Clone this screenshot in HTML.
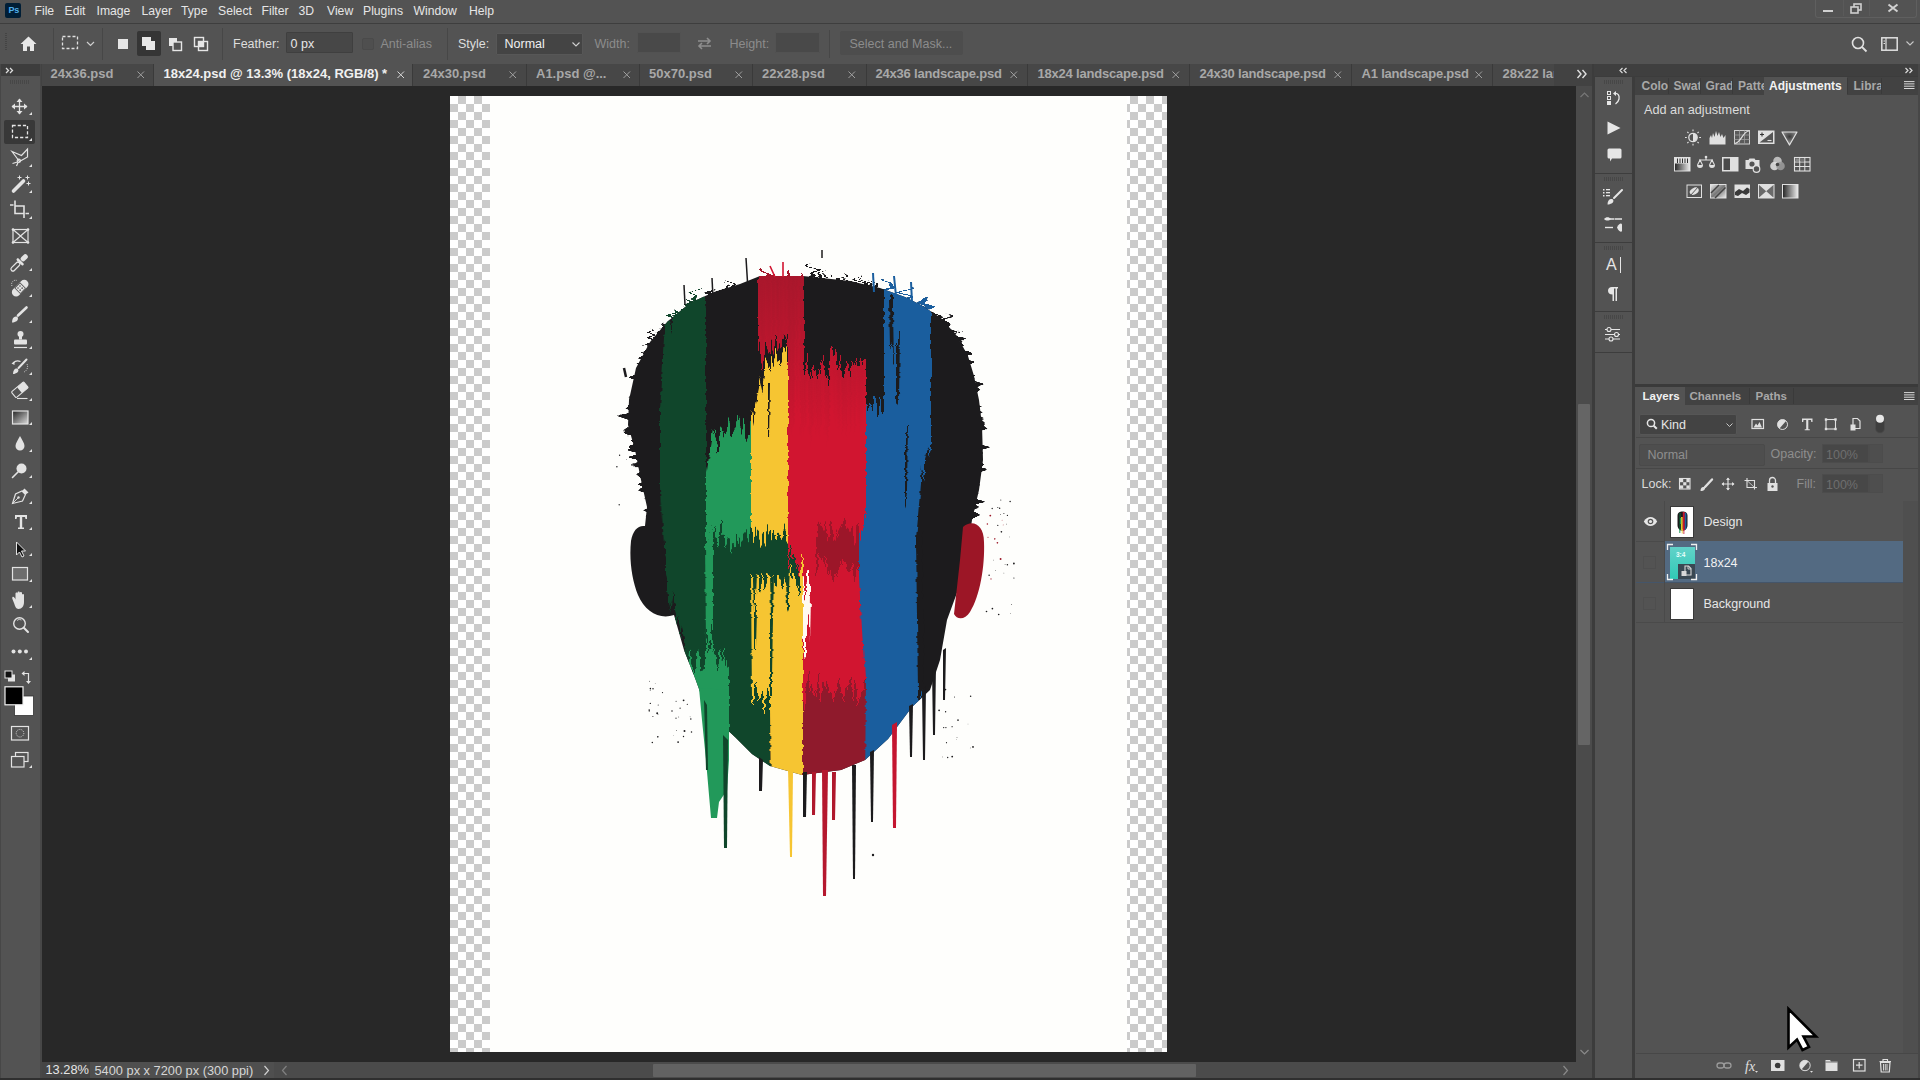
<!DOCTYPE html>
<html><head><meta charset="utf-8">
<style>
*{margin:0;padding:0;box-sizing:border-box}
html,body{width:1920px;height:1080px;overflow:hidden;background:#535353;font-family:"Liberation Sans",sans-serif;color:#e6e6e6}
.a{position:absolute}
.t{position:absolute;white-space:nowrap;line-height:1}
.mi{top:4.8px;font-size:12.2px;color:#e6e6e6}
.ot{top:37.5px;font-size:12.5px;color:#dedede}
.st{top:1065px;font-size:12.8px;color:#e6e6e6}
.sep{position:absolute;width:1px;background:#474747}
.inp{background:#474747;border:1px solid #3f3f3f;border-radius:1px}
.tab{position:absolute;top:64px;height:22px;background:#474747;border-right:1px solid #3a3a3a}
.tab.act{background:#535353}
.tab .n{position:absolute;top:3px;font-size:13px;font-weight:bold;color:#a8a8a8;white-space:nowrap;line-height:1}
.tab.act .n{color:#f0f0f0}
.tab .x{position:absolute;top:6px;width:10px;height:10px}
.pt{font-size:12px;font-weight:bold;color:#a8a8a8}
.grip{width:20px;height:4px;background:repeating-linear-gradient(90deg,#474747 0 1px,transparent 1px 2px)}
</style></head><body>
<!-- MENUBAR -->
<div class="a" style="left:0;top:0;width:1920px;height:23px;background:#535353"></div>
<div class="a" style="left:5px;top:3px;width:16px;height:15px;background:#001e36;border-radius:2px"></div>
<div class="t" style="left:8.5px;top:6.3px;font-size:9px;font-weight:bold;color:#4faeea;letter-spacing:-0.2px">Ps</div>
<div class="t mi" style="left:34.5px">File</div>
<div class="t mi" style="left:64.5px">Edit</div>
<div class="t mi" style="left:96.5px">Image</div>
<div class="t mi" style="left:141.5px">Layer</div>
<div class="t mi" style="left:181px">Type</div>
<div class="t mi" style="left:218px">Select</div>
<div class="t mi" style="left:261.5px">Filter</div>
<div class="t mi" style="left:298.5px">3D</div>
<div class="t mi" style="left:327px">View</div>
<div class="t mi" style="left:363px">Plugins</div>
<div class="t mi" style="left:413.5px">Window</div>
<div class="t mi" style="left:469px">Help</div>
<!-- window controls -->
<div class="a" style="left:1815px;top:0;width:102px;height:17.5px;border:1px solid #5f5f5f;border-top:none;border-radius:0 0 3px 3px"></div>
<div class="a" style="left:1842.5px;top:0;width:1px;height:16px;background:#5a5a5a"></div>
<div class="a" style="left:1869px;top:0;width:1px;height:16px;background:#5a5a5a"></div>
<div class="a" style="left:1823px;top:10px;width:10px;height:2px;background:#d0d0d0"></div>
<svg class="a" style="left:1850px;top:3px" width="13" height="11" viewBox="0 0 13 11"><rect x="4" y="1" width="7" height="6" fill="none" stroke="#d0d0d0" stroke-width="1.6"/><rect x="1" y="4" width="7" height="6" fill="#535353" stroke="#d0d0d0" stroke-width="1.6"/></svg>
<svg class="a" style="left:1887px;top:3px" width="12" height="10" viewBox="0 0 12 10"><path d="M1.5 1.5L10.5 8.5M10.5 1.5L1.5 8.5" stroke="#d0d0d0" stroke-width="2"/></svg>
<div class="a" style="left:0;top:23px;width:1920px;height:1px;background:#3e3e3e"></div>

<!-- OPTIONS BAR -->
<div class="a" style="left:0;top:24px;width:1920px;height:40px;background:#535353"></div>
<div class="a" style="left:5px;top:33px;width:2px;height:18px;background:repeating-linear-gradient(#444 0 1px,transparent 1px 2px)"></div>
<svg class="a" style="left:20px;top:36px" width="17" height="16" viewBox="0 0 17 16"><path d="M8.5 0.5L0.5 8H3V15H7V10.5H10V15H14V8H16.5Z" fill="#e8e8e8"/></svg>
<div class="a sep" style="left:53px;top:28px;height:32px"></div>
<svg class="a" style="left:61px;top:35px" width="18" height="15" viewBox="0 0 18 15"><rect x="1.5" y="1.5" width="15" height="12" fill="none" stroke="#e0e0e0" stroke-width="1.3" stroke-dasharray="3 2"/></svg>
<svg class="a" style="left:86px;top:41px" width="9" height="6" viewBox="0 0 9 6"><path d="M1 1L4.5 4.5L8 1" fill="none" stroke="#cfcfcf" stroke-width="1.2"/></svg>
<div class="a sep" style="left:102px;top:28px;height:32px"></div>
<div class="a" style="left:118px;top:39px;width:10px;height:10px;background:#e6e6e6"></div>
<div class="a" style="left:137px;top:31px;width:24px;height:25px;background:#353535;border-radius:2px"></div>
<svg class="a" style="left:141px;top:36px" width="16" height="16" viewBox="0 0 16 16"><rect x="1" y="1" width="9" height="9" fill="#e6e6e6"/><rect x="5" y="5" width="9" height="9" fill="#e6e6e6"/></svg>
<svg class="a" style="left:168px;top:37px" width="15" height="15" viewBox="0 0 15 15"><rect x="1" y="1" width="8" height="8" fill="#e6e6e6"/><rect x="5" y="5" width="8.5" height="8.5" fill="#535353" stroke="#e6e6e6" stroke-width="1.4"/></svg>
<svg class="a" style="left:193px;top:36px" width="16" height="16" viewBox="0 0 16 16"><rect x="1.5" y="1.5" width="9" height="9" fill="none" stroke="#e6e6e6" stroke-width="1.4"/><rect x="5.5" y="5.5" width="9" height="9" fill="none" stroke="#e6e6e6" stroke-width="1.4"/><rect x="5.5" y="5.5" width="5" height="5" fill="#e6e6e6"/></svg>
<div class="a sep" style="left:222px;top:28px;height:32px"></div>
<div class="t ot" style="left:233px">Feather:</div>
<div class="a inp" style="left:286px;top:32px;width:67px;height:21px"></div>
<div class="t ot" style="left:290.5px;color:#e8e8e8">0 px</div>
<div class="a" style="left:362px;top:38px;width:12px;height:12px;border:1px solid #4a4a4a;background:#4f4f4f;border-radius:2px"></div>
<div class="t ot" style="left:380.5px;color:#8c8c8c">Anti-alias</div>
<div class="a sep" style="left:447px;top:28px;height:32px"></div>
<div class="t ot" style="left:458px">Style:</div>
<div class="a inp" style="left:496px;top:33px;width:87px;height:22px;background:#444;border-color:#575757"></div>
<div class="t ot" style="left:504.5px;color:#f0f0f0">Normal</div>
<svg class="a" style="left:572px;top:42px" width="8" height="5" viewBox="0 0 8 5"><path d="M0.5 0.5L4 4L7.5 0.5" fill="none" stroke="#d0d0d0" stroke-width="1.1"/></svg>
<div class="t ot" style="left:594.5px;color:#8c8c8c">Width:</div>
<div class="a inp" style="left:637px;top:32px;width:44px;height:21px;background:#494949;border-color:#525252"></div>
<svg class="a" style="left:697px;top:36px" width="15" height="15" viewBox="0 0 15 15"><path d="M1 5H13M10 2L13 5L10 8" fill="none" stroke="#8e8e8e" stroke-width="1.6"/><path d="M14 10H2M5 7L2 10L5 13" fill="none" stroke="#8e8e8e" stroke-width="1.6"/></svg>
<div class="t ot" style="left:729.5px;color:#8c8c8c">Height:</div>
<div class="a inp" style="left:775px;top:32px;width:45px;height:21px;background:#494949;border-color:#525252"></div>
<div class="a sep" style="left:829px;top:30px;height:28px"></div>
<div class="a" style="left:840px;top:31px;width:123px;height:24px;background:#4d4d4d;border-radius:2px"></div>
<div class="t ot" style="left:849.5px;color:#8c8c8c">Select and Mask...</div>
<svg class="a" style="left:1851px;top:36px" width="17" height="17" viewBox="0 0 17 17"><circle cx="7" cy="7" r="5.5" fill="none" stroke="#e0e0e0" stroke-width="1.6"/><path d="M11 11L15.5 15.5" stroke="#e0e0e0" stroke-width="1.8"/></svg>
<svg class="a" style="left:1881px;top:37px" width="17" height="14" viewBox="0 0 17 14"><rect x="0.8" y="0.8" width="15.4" height="12.4" fill="none" stroke="#e0e0e0" stroke-width="1.5"/><path d="M5 1V13" stroke="#e0e0e0" stroke-width="1.2"/><path d="M2.5 4H4M2.5 6.5H4" stroke="#e0e0e0" stroke-width="1"/></svg>
<svg class="a" style="left:1906px;top:41px" width="8" height="5" viewBox="0 0 8 5"><path d="M0.5 0.5L4 4L7.5 0.5" fill="none" stroke="#c8c8c8" stroke-width="1.1"/></svg>

<!-- TOOLBAR -->
<div class="a" style="left:0;top:64px;width:42px;height:1016px;background:#474747"></div>
<div class="a" style="left:1px;top:64px;width:39px;height:12px;background:#3d3d3d"></div>
<svg class="a" style="left:5px;top:67px" width="9" height="7" viewBox="0 0 9 7"><path d="M1 1L3.5 3.5L1 6M5 1L7.5 3.5L5 6" fill="none" stroke="#dedede" stroke-width="1.3"/></svg>
<div class="a" style="left:1px;top:76px;width:38.5px;height:1004px;background:#535353"></div>
<div class="a" style="left:10px;top:80px;width:20px;height:4px;background:repeating-linear-gradient(90deg,#474747 0 1px,transparent 1px 2px)"></div>
<div class="a" style="left:4px;top:120px;width:31px;height:24px;background:#383838;border-radius:2px"></div>
<svg class="a" style="left:0;top:90px" width="40" height="690" viewBox="0 90 40 690">
<g fill="#e3e3e3" stroke="none">
<!-- little corner triangles -->
<path d="M29 115L32 112V115Z"/><path d="M29 141L32 138V141Z"/><path d="M29 167L32 164V167Z"/><path d="M29 193L32 190V193Z"/><path d="M29 219L32 216V219Z"/>
<path d="M29 271L32 268V271Z"/><path d="M29 297L32 294V297Z"/><path d="M29 323L32 320V323Z"/><path d="M29 349L32 346V349Z"/><path d="M29 375L32 372V375Z"/><path d="M29 401L32 398V401Z"/><path d="M29 425L32 422V425Z"/>
<path d="M29 452L32 449V452Z"/><path d="M29 478L32 475V478Z"/><path d="M29 504L32 501V504Z"/><path d="M29 530L32 527V530Z"/><path d="M29 556L32 553V556Z"/><path d="M29 582L32 579V582Z"/><path d="M29 608L32 605V608Z"/><path d="M29 660L32 657V660Z"/><path d="M29 768L32 765V768Z"/>
</g>
<g fill="none" stroke="#e3e3e3" stroke-width="1.3">
<!-- move -->
<path d="M19.5 99V114M12 106.5H27"/>
</g>
<g fill="#e3e3e3">
<path d="M19.5 98.5L16.5 102H22.5Z M19.5 114.5L16.5 111H22.5Z M11.5 106.5L15 103.5V109.5Z M27.5 106.5L24 103.5V109.5Z"/>
</g>
<!-- marquee -->
<rect x="12.5" y="125.5" width="15" height="12" fill="none" stroke="#e6e6e6" stroke-width="1.3" stroke-dasharray="3.2 2"/>
<!-- lasso -->
<g fill="none" stroke="#e3e3e3" stroke-width="1.2">
<path d="M12 151.5L21.5 155.5L27.5 149V157L19.5 161.5Z"/>
<circle cx="18.8" cy="160.8" r="1.6"/>
<path d="M17.5 162L12.5 163.5M18 162.5L16.5 166"/>
</g>
<!-- wand -->
<path d="M13.5 191L23.5 181" stroke="#e3e3e3" stroke-width="3.6" stroke-linecap="round"/>
<path d="M19.5 175.5V179.5M17.5 177.5H21.5M27.5 175.5V179.5M25.5 177.5H29.5M28.5 181.5V185.5M26.5 183.5H30.5" stroke="#e3e3e3" stroke-width="1"/>
<!-- crop -->
<path d="M10 205H13.5M15 200.5V213.5H24M15 206H24V218M25.5 213.5H29" fill="none" stroke="#e3e3e3" stroke-width="1.6"/>
<!-- frame -->
<g fill="none" stroke="#e3e3e3" stroke-width="1.2"><rect x="13" y="229.5" width="15" height="13"/><path d="M13 229.5L28 242.5M28 229.5L13 242.5"/></g>
<g fill="#e3e3e3"><circle cx="13" cy="229.5" r="1.3"/><circle cx="28" cy="229.5" r="1.3"/><circle cx="13" cy="242.5" r="1.3"/><circle cx="28" cy="242.5" r="1.3"/></g>
<!-- eyedropper -->
<g transform="rotate(45 20 262)">
<rect x="18" y="263" width="4" height="11" rx="2" fill="none" stroke="#e3e3e3" stroke-width="1.2"/>
<rect x="15.5" y="260.5" width="9" height="2.5" rx="1" fill="#e3e3e3"/>
<rect x="17.5" y="252" width="5" height="8" rx="2.5" fill="#e3e3e3"/>
</g>
<!-- healing -->
<g transform="rotate(-45 20 288)">
<rect x="10" y="284" width="20" height="8.5" rx="4.2" fill="#e3e3e3"/>
<rect x="16" y="284" width="8" height="8.5" fill="#535353"/>
<rect x="16.8" y="284.8" width="6.4" height="6.9" fill="#e3e3e3"/>
<g fill="#535353"><circle cx="18.6" cy="286.6" r="0.8"/><circle cx="21.4" cy="286.6" r="0.8"/><circle cx="18.6" cy="289.6" r="0.8"/><circle cx="21.4" cy="289.6" r="0.8"/></g>
</g>
<path d="M12 286A4 4 0 0 1 17 280.5" fill="none" stroke="#e3e3e3" stroke-width="1" stroke-dasharray="1 1.2"/>
<!-- brush -->
<path d="M18 315.5L26.5 307.5" stroke="#e3e3e3" stroke-width="2.6" stroke-linecap="round"/>
<path d="M12 322.5C12 318 14 316 16.5 316.5C18.5 317 18.5 320 16 321.5C15 322 13.5 322.5 12 322.5Z" fill="#e3e3e3"/>
<!-- stamp -->
<circle cx="20.5" cy="334" r="3" fill="#e3e3e3"/>
<path d="M19 336H22V339.5H19Z" fill="#e3e3e3"/>
<rect x="14" y="339.5" width="13" height="5" rx="1" fill="#e3e3e3"/>
<path d="M14 347.5H27" stroke="#e3e3e3" stroke-width="1.2"/>
<!-- history brush -->
<path d="M18.5 368L26.5 359.5" stroke="#e3e3e3" stroke-width="2" stroke-linecap="round"/>
<path d="M13 374C13 370 15 368 17 368.5C19 369 19 372 16.5 373C15.5 373.5 14.5 374 13 374Z" fill="#e3e3e3"/>
<path d="M13.5 363C15 361 18 360.5 20.5 361.5" fill="none" stroke="#e3e3e3" stroke-width="1.2"/>
<path d="M11.5 363.5L14.5 361V365Z" fill="#e3e3e3"/>
<path d="M27 364A6 6 0 0 1 24 372" fill="none" stroke="#e3e3e3" stroke-width="0.9" stroke-dasharray="1 1"/>
<!-- eraser -->
<g transform="rotate(-40 20 390)">
<rect x="12" y="386" width="16" height="7.5" rx="1" fill="none" stroke="#e3e3e3" stroke-width="1.1"/>
<rect x="19.5" y="386" width="8.5" height="7.5" rx="1" fill="#e3e3e3"/>
</g>
<path d="M17 398.5H27.5" stroke="#e3e3e3" stroke-width="1.1"/>
<!-- gradient -->
<defs><linearGradient id="gr" x1="0" y1="0" x2="1" y2="1"><stop offset="0" stop-color="#222"/><stop offset="1" stop-color="#ddd"/></linearGradient></defs>
<rect x="12.5" y="411" width="15.5" height="13" fill="url(#gr)" stroke="#e3e3e3" stroke-width="1.2"/>
<!-- blur drop -->
<path d="M20 436C18 440 15.5 443 15.5 446A4.5 4.5 0 0 0 24.5 446C24.5 443 22 440 20 436Z" fill="#e3e3e3"/>
<!-- dodge -->
<circle cx="21.5" cy="468.5" r="5" fill="#e3e3e3"/>
<path d="M18 472L12.5 477.5" stroke="#e3e3e3" stroke-width="1.6" stroke-linecap="round"/>
<!-- pen -->
<path d="M12.5 503.5L15.5 494L22 491L25.5 494.5L22.5 501Z" fill="none" stroke="#e3e3e3" stroke-width="1.2"/>
<path d="M22 491L24.5 488.5L28.5 492.5L25.5 494.5Z" fill="#e3e3e3"/>
<path d="M12.5 503.5L18 498" stroke="#e3e3e3" stroke-width="0.9"/>
<circle cx="18.5" cy="497.5" r="1.2" fill="#e3e3e3"/>
<!-- type -->
<path d="M15 515H27V519H25.5L25 517H22.2V527.5H24V529H18V527.5H19.8V517H17L16.5 519H15Z" fill="#e3e3e3"/>
<!-- path selection -->
<path d="M16.5 542L16.5 555L19.5 552L22 557L24 556L21.5 551H25.5Z" fill="#111" stroke="#e3e3e3" stroke-width="1"/>
<!-- rectangle -->
<rect x="12.5" y="567.5" width="15" height="12.5" fill="#6d6d6d" stroke="#e3e3e3" stroke-width="1.2"/>
<!-- hand -->
<path d="M14 603C13 600 11.5 598 12.5 597C13.5 596 15 598 15.5 599.5V593.5C15.5 592 17.5 592 17.5 593.5V598V592.5C17.5 591 19.8 591 19.8 592.5V598V593C19.8 591.5 22 591.5 22 593V598.5V595C22 593.5 24 593.5 24 595V602C24 606 22 609 18.5 609C16 609 15 606 14 603Z" fill="#e3e3e3"/>
<!-- zoom -->
<circle cx="19.5" cy="623.5" r="5.8" fill="none" stroke="#e3e3e3" stroke-width="1.4"/>
<path d="M23.8 627.8L28 632" stroke="#e3e3e3" stroke-width="2" stroke-linecap="round"/>
<path d="M17 620.5A3.5 3.5 0 0 1 21.5 620" fill="none" stroke="#e3e3e3" stroke-width="0.8"/>
<!-- more -->
<circle cx="13.5" cy="651.5" r="2" fill="#e3e3e3"/><circle cx="19.8" cy="651.5" r="2" fill="#e3e3e3"/><circle cx="26" cy="651.5" r="2" fill="#e3e3e3"/>
<!-- default colors -->
<rect x="8" y="674.5" width="7" height="7" fill="#e3e3e3"/>
<rect x="5" y="671" width="7" height="7" fill="#111" stroke="#e3e3e3" stroke-width="1"/>
<!-- swap -->
<path d="M22.5 673.5H28.5V682" fill="none" stroke="#e3e3e3" stroke-width="1.2"/>
<path d="M21.5 673.5L24.5 671V676Z M28.5 684L26 681H31Z" fill="#e3e3e3"/>
<!-- BG -->
<rect x="14.5" y="696" width="19" height="19.5" fill="#fff" stroke="#333" stroke-width="0.8"/>
<!-- FG -->
<rect x="5" y="686.8" width="18" height="18" fill="#000" stroke="#f0f0f0" stroke-width="1.2"/>
<!-- quick mask -->
<rect x="11.5" y="726.5" width="17" height="13.5" fill="none" stroke="#e3e3e3" stroke-width="1.2"/>
<circle cx="20" cy="733.2" r="3.8" fill="none" stroke="#e3e3e3" stroke-width="0.9" stroke-dasharray="1 1.1"/>
<!-- screen mode -->
<rect x="15.5" y="752.5" width="12.5" height="9" fill="none" stroke="#e3e3e3" stroke-width="1.2"/>
<rect x="11.5" y="756.5" width="12.5" height="10.5" fill="#535353" stroke="#e3e3e3" stroke-width="1.2"/>
</svg>

<!-- PASTEBOARD -->
<div class="a" style="left:42px;top:86px;width:1534px;height:976px;background:#282828"></div>
<!-- vertical scrollbar -->
<div class="a" style="left:1576px;top:86px;width:17px;height:976px;background:#4b4b4b"></div>
<div class="a" style="left:1578px;top:404px;width:12px;height:341px;background:#656565;border-radius:1px"></div>
<svg class="a" style="left:1579px;top:91px" width="11" height="8" viewBox="0 0 11 8"><path d="M1.5 6L5.5 2L9.5 6" fill="none" stroke="#777" stroke-width="1.2"/></svg>
<svg class="a" style="left:1579px;top:1048px" width="11" height="8" viewBox="0 0 11 8"><path d="M1.5 2L5.5 6L9.5 2" fill="none" stroke="#8a8a8a" stroke-width="1.2"/></svg>
<!-- status bar -->
<div class="a" style="left:42px;top:1062px;width:1551px;height:16px;background:#4b4b4b"></div>
<div class="a" style="left:42px;top:1062px;width:48px;height:16px;background:#454545"></div>
<div class="a" style="left:90px;top:1062px;width:184px;height:16px;background:#4f4f4f"></div>
<div class="t st" style="left:45.5px;top:1064px">13.28%</div>
<div class="t st" style="left:94.5px;color:#d6d6d6">5400 px x 7200 px (300 ppi)</div>
<svg class="a" style="left:263px;top:1065px" width="7" height="11" viewBox="0 0 7 11"><path d="M1.5 1L5.5 5.5L1.5 10" fill="none" stroke="#d0d0d0" stroke-width="1.2"/></svg>
<svg class="a" style="left:281px;top:1065px" width="7" height="11" viewBox="0 0 7 11"><path d="M5.5 1L1.5 5.5L5.5 10" fill="none" stroke="#808080" stroke-width="1.2"/></svg>
<div class="a" style="left:653px;top:1064px;width:543px;height:13px;background:#626262;border-radius:1px"></div>
<svg class="a" style="left:1562px;top:1065px" width="7" height="11" viewBox="0 0 7 11"><path d="M1.5 1L5.5 5.5L1.5 10" fill="none" stroke="#8a8a8a" stroke-width="1.2"/></svg>
<div class="a" style="left:0;top:1078px;width:1920px;height:2px;background:#2e2e2e"></div>

<!-- TAB BAR -->
<div class="a" style="left:41px;top:64px;width:1553px;height:22px;background:#424242"></div>
<div class="a tab" style="left:42px;width:112px"><span class="n" style="left:8.5px">24x36.psd</span><svg class="x" style="left:94px" viewBox="0 0 10 10"><path d="M1.5 1.5L8 8M8 1.5L1.5 8" stroke="#a0a0a0" stroke-width="1"/></svg></div>
<div class="a tab act" style="left:154px;width:259px"><span class="n" style="left:9.5px">18x24.psd @ 13.3% (18x24, RGB/8) *</span><svg class="x" style="left:242px" viewBox="0 0 10 10"><path d="M1.5 1.5L8 8M8 1.5L1.5 8" stroke="#d8d8d8" stroke-width="1"/></svg></div>
<div class="a tab" style="left:413px;width:114px"><span class="n" style="left:10px">24x30.psd</span><svg class="x" style="left:95px" viewBox="0 0 10 10"><path d="M1.5 1.5L8 8M8 1.5L1.5 8" stroke="#a0a0a0" stroke-width="1"/></svg></div>
<div class="a tab" style="left:527px;width:113px"><span class="n" style="left:9px">A1.psd @...</span><svg class="x" style="left:95px" viewBox="0 0 10 10"><path d="M1.5 1.5L8 8M8 1.5L1.5 8" stroke="#a0a0a0" stroke-width="1"/></svg></div>
<div class="a tab" style="left:640px;width:113px"><span class="n" style="left:9px">50x70.psd</span><svg class="x" style="left:94px" viewBox="0 0 10 10"><path d="M1.5 1.5L8 8M8 1.5L1.5 8" stroke="#a0a0a0" stroke-width="1"/></svg></div>
<div class="a tab" style="left:753px;width:114px"><span class="n" style="left:9px">22x28.psd</span><svg class="x" style="left:94px" viewBox="0 0 10 10"><path d="M1.5 1.5L8 8M8 1.5L1.5 8" stroke="#a0a0a0" stroke-width="1"/></svg></div>
<div class="a tab" style="left:867px;width:161px"><span class="n" style="left:8.5px;letter-spacing:-0.2px">24x36 landscape.psd</span><svg class="x" style="left:142px" viewBox="0 0 10 10"><path d="M1.5 1.5L8 8M8 1.5L1.5 8" stroke="#a0a0a0" stroke-width="1"/></svg></div>
<div class="a tab" style="left:1028px;width:162px"><span class="n" style="left:9.5px;letter-spacing:-0.2px">18x24 landscape.psd</span><svg class="x" style="left:143px" viewBox="0 0 10 10"><path d="M1.5 1.5L8 8M8 1.5L1.5 8" stroke="#a0a0a0" stroke-width="1"/></svg></div>
<div class="a tab" style="left:1190px;width:162px"><span class="n" style="left:9.5px;letter-spacing:-0.2px">24x30 landscape.psd</span><svg class="x" style="left:143px" viewBox="0 0 10 10"><path d="M1.5 1.5L8 8M8 1.5L1.5 8" stroke="#a0a0a0" stroke-width="1"/></svg></div>
<div class="a tab" style="left:1352px;width:141px"><span class="n" style="left:9.5px;letter-spacing:-0.2px">A1 landscape.psd</span><svg class="x" style="left:122px" viewBox="0 0 10 10"><path d="M1.5 1.5L8 8M8 1.5L1.5 8" stroke="#a0a0a0" stroke-width="1"/></svg></div>
<div class="a tab" style="left:1493px;width:61px;overflow:hidden;border-right:none"><span class="n" style="left:9.5px">28x22 landscape.psd</span></div>
<svg class="a" style="left:1576px;top:69px" width="12" height="10" viewBox="0 0 12 10"><path d="M1.5 1L5 5L1.5 9M6.5 1L10 5L6.5 9" fill="none" stroke="#e0e0e0" stroke-width="1.4"/></svg>

<!-- CANVAS -->
<div class="a" style="left:450px;top:96px;width:717px;height:956px;background:repeating-conic-gradient(#cbcbcb 0 25%,#fff 0 50%) 0 0/16px 16px"></div>
<div class="a" style="left:490px;top:96px;width:637px;height:956px;background:#fefefc"></div>
<svg class="a" style="left:450px;top:96px" width="717" height="956" viewBox="450 96 717 956">
<defs>
<path id="sil" d="M760 276 L803 276 L850 281 L880 288 L905 297 L921 305 L941 318 L957 336 L968 356 L974 376 L979 400 L982 425 L983 460 L979 490 L972 520 L966 560 L958 590 L947 620 L940 660 L930 690 L912 707 L888 739 L865 760 L841 770 L802 775 L770 766 L752 754 L735 737 L707 711 L695 678 L684 650 L674 615 C660 620 645 612 638 595 C632 580 629 560 631 541 C633 530 638 525 645 526 L647 507 L641 480 L635 450 L628 425 L629 400 L636 368 L650 342 L667 322 L690 303 L714 292 L740 284 Z"/>
<clipPath id="head"><path d="M760 276 L803 276 L850 281 L880 288 L905 297 L921 305 L941 318 L957 336 L968 356 L974 376 L979 400 L982 425 L983 460 L979 490 L972 520 L966 560 L958 590 L947 620 L940 660 L930 690 L912 707 L888 739 L865 760 L841 770 L802 775 L770 766 L752 754 L735 737 L707 711 L695 678 L684 650 L674 615 C660 620 645 612 638 595 C632 580 629 560 631 541 C633 530 638 525 645 526 L647 507 L641 480 L635 450 L628 425 L629 400 L636 368 L650 342 L667 322 L690 303 L714 292 L740 284 Z"/></clipPath>
<clipPath id="upper"><rect x="600" y="200" width="420" height="320"/></clipPath>
<filter id="streak" x="-10%" y="-15%" width="120%" height="130%" color-interpolation-filters="sRGB">
<feTurbulence type="fractalNoise" baseFrequency="0.3 0.004" numOctaves="2" seed="7" result="n"/>
<feColorMatrix in="n" type="matrix" values="0 0 0 0 0.5  0 1 0 0 0  0 0 0 0 0  0 0 0 0 1" result="m"/>
<feDisplacementMap in="SourceGraphic" in2="m" scale="70" xChannelSelector="R" yChannelSelector="G" result="d1"/>
<feTurbulence type="fractalNoise" baseFrequency="0.008 0.25" numOctaves="1" seed="11" result="n2"/>
<feColorMatrix in="n2" type="matrix" values="1 0 0 0 0  0 0 0 0 0.5  0 0 0 0 0  0 0 0 0 1" result="m2"/>
<feDisplacementMap in="d1" in2="m2" scale="4" xChannelSelector="R" yChannelSelector="G"/>
</filter>
<filter id="hair" x="-10%" y="-15%" width="120%" height="130%" color-interpolation-filters="sRGB">
<feTurbulence type="fractalNoise" baseFrequency="0.22 0.012" numOctaves="1" seed="3" result="n"/>
<feColorMatrix in="n" type="matrix" values="0 0 0 0 0.5  0 1 0 0 0  0 0 0 0 0  0 0 0 0 1" result="m"/>
<feDisplacementMap in="SourceGraphic" in2="m" scale="55" xChannelSelector="R" yChannelSelector="G" result="d1"/>
<feTurbulence type="fractalNoise" baseFrequency="0.012 0.22" numOctaves="1" seed="5" result="n2"/>
<feColorMatrix in="n2" type="matrix" values="1 0 0 0 0  0 0 0 0 0.5  0 0 0 0 0  0 0 0 0 1" result="m2"/>
<feDisplacementMap in="d1" in2="m2" scale="35" xChannelSelector="R" yChannelSelector="G"/>
</filter>
<linearGradient id="redg" x1="0" y1="250" x2="0" y2="430" gradientUnits="userSpaceOnUse"><stop offset="0" stop-color="#a3172b"/><stop offset="0.45" stop-color="#b5162d"/><stop offset="1" stop-color="#d11530"/></linearGradient>
</defs>
<!-- spiky hair layer -->
<g clip-path="url(#upper)"><g filter="url(#hair)"><use href="#sil" fill="#1c1b1d"/>
<g clip-path="url(#head)"><rect x="670" y="250" width="36" height="150" fill="#10462b"/><rect x="758" y="250" width="46" height="120" fill="#a3172b"/><rect x="884" y="250" width="47" height="150" fill="#1a5e9e"/></g>
</g></g>
<!-- silhouette -->
<use href="#sil" fill="#1c1b1d"/>
<g clip-path="url(#head)"><g filter="url(#streak)">
<!-- dark green -->
<path fill="#10462b" d="M678 300 L706 290 L706 432 L706 537 L800 535 L800 578 L770 585 L770 790 L700 790 L684 650 L674 615 L664 560 L660 470 L660 400 L664 340 Z"/>
<!-- yellow -->
<path fill="#f6c532" d="M764 368 L788 362 L788 560 L803 560 L803 790 L771 790 L770 700 L752 700 L751 578 L770 585 L800 578 L800 535 L751 537 L751 425 Z"/>
<path fill="#10462b" d="M752 700 L770 700 L770 790 L752 790 Z"/>
<!-- light green -->
<path fill="#22995a" d="M712 436 L751 430 L751 537 L706 540 L706 470 Z"/>
<path fill="#22995a" d="M705 540 L713 540 L713 650 L706 650 Z"/>
<path fill="#22995a" d="M690 664 L712 658 L729 664 L729 790 L700 790 L686 690 Z"/>
<!-- red -->
<path fill="url(#redg)" d="M758 250 L804 250 L804 365 L866 365 L866 690 L803 690 L803 560 L788 560 L788 350 L758 355 Z"/>
<path fill="#8f1a2c" d="M803 690 L866 690 L866 790 L803 790 Z"/>
<path fill="#9c1629" d="M816 531 L859 528 L859 568 L816 568 Z"/>
<!-- blue -->
<path fill="#1a5e9e" d="M884 250 L931 250 L931 440 L922 470 L916 540 L922 650 L922 720 L865 790 L866 690 L859 568 L859 530 L866 528 L866 405 L884 405 Z"/>
<path fill="#1c1b1d" d="M889 300 L893 300 L894 355 L890 350 Z M896 330 L900 330 L899 400 L896 395 Z M905 440 L908 440 L907 500 L905 495 Z"/>
<!-- white streak -->
<path fill="#fffaf2" d="M803 586 L811 590 L810 640 L803 642 Z"/>
<!-- dark drips in yellow -->
<path fill="#10462b" d="M753 578 L757 578 L756 605 L754 610 Z M770 585 L774 585 L773 625 L771 630 Z M786 578 L790 578 L789 600 L787 605 Z M770 628 L773 628 L772 690 L770 690 Z M754 620 L757 620 L756 660 L754 660 Z"/>
<!-- black strands -->
<path fill="#1c1b1d" d="M916 540 L922 540 L924 690 L918 700 Z M768 380 L770 380 L769 430 L768 430 Z"/>
</g></g>
<!-- right ear -->
<path fill="#9c1626" d="M963 527 C972 519 984 524 984 542 C985 566 980 596 970 612 C965 620 957 620 954 614 L960 560 Z"/>
<!-- hair spikes top -->
<g stroke="#1c1b1d" stroke-width="1.5" fill="none">
<path d="M746 258 L748 290"/><path d="M822 250 V258"/>
<path d="M684 285 L685 305"/><path d="M712 278 L713 298"/>
</g>
<g stroke="#1a5e9e" stroke-width="2" fill="none"><path d="M873 273 L874 292"/><path d="M894 276 L896 296"/><path d="M911 282 L912 302"/></g>
<path d="M770 266 L775 277 M783 262 L783 277" stroke="#d11530" stroke-width="1.6"/>
<path d="M624 368 L626 377" stroke="#1c1b1d" stroke-width="2.5"/>
<!-- drips -->
<g>
<path fill="#22995a" d="M699 688 L729 690 L729 760 L727 790 L719 802 L717 818 L711 818 L709 795 L706 760 L702 720 Z"/>
<path fill="#10462b" d="M723 735 L728 740 L727 848 L724 848 Z"/>
<path fill="#1c1b1d" d="M759 757 L763 760 L762 791 L759 791 Z"/>
<path fill="#f6c532" d="M788 768 L793 770 L792 857 L790 857 Z"/>
<path fill="#1c1b1d" d="M803 772 L807 772 L806 817 L803 817 Z"/>
<path fill="#b0182c" d="M812 772 L816 772 L815 815 L812 815 Z M832 772 L836 772 L835 820 L832 820 Z"/>
<path fill="#b5182e" d="M822 770 L828 770 L826 896 L823 896 Z"/>
<path fill="#1c1b1d" d="M852 765 L856 765 L855 879 L853 879 Z"/>
<path fill="#1c1b1d" d="M870 752 L874 750 L873 822 L871 822 Z"/>
<path fill="#c41630" d="M892 725 L897 722 L896 828 L893 828 Z"/>
<path fill="#1c1b1d" d="M909 706 L913 704 L912 757 L910 757 Z"/>
<path fill="#1c1b1d" d="M922 690 L926 686 L925 760 L923 760 Z M932 670 L936 665 L935 735 L933 735 Z M943 650 L946 648 L945 700 L943 700 Z"/>
<path fill="#10462b" d="M704 700 L707 705 L708 770 L706 770 Z"/>
</g>
<!-- splatter -->
<g><circle cx="676.1" cy="701.3" r="0.52" fill="#1c1b1d"/><circle cx="657.8" cy="736.8" r="0.83" fill="#1c1b1d"/><circle cx="687.3" cy="704.3" r="0.60" fill="#1c1b1d"/><circle cx="649.3" cy="710.9" r="0.68" fill="#1c1b1d"/><circle cx="649.2" cy="709.9" r="0.75" fill="#1c1b1d"/><circle cx="672.0" cy="711.0" r="0.75" fill="#1c1b1d"/><circle cx="683.6" cy="700.3" r="0.90" fill="#1c1b1d"/><circle cx="678.7" cy="717.0" r="0.45" fill="#1c1b1d"/><circle cx="690.1" cy="716.8" r="0.38" fill="#1c1b1d"/><circle cx="652.3" cy="742.4" r="0.75" fill="#1c1b1d"/><circle cx="683.5" cy="736.5" r="0.68" fill="#1c1b1d"/><circle cx="690.8" cy="718.9" r="0.75" fill="#1c1b1d"/><circle cx="684.5" cy="730.9" r="0.98" fill="#1c1b1d"/><circle cx="673.4" cy="735.2" r="0.30" fill="#1c1b1d"/><circle cx="658.0" cy="714.5" r="0.38" fill="#1c1b1d"/><circle cx="658.2" cy="705.1" r="0.52" fill="#1c1b1d"/><circle cx="676.0" cy="718.2" r="0.60" fill="#1c1b1d"/><circle cx="657.2" cy="713.3" r="0.98" fill="#1c1b1d"/><circle cx="676.5" cy="730.5" r="0.45" fill="#1c1b1d"/><circle cx="680.1" cy="708.2" r="0.60" fill="#1c1b1d"/><circle cx="691.5" cy="732.0" r="0.75" fill="#1c1b1d"/><circle cx="678.1" cy="742.1" r="0.90" fill="#1c1b1d"/><circle cx="649.6" cy="681.3" r="0.45" fill="#1c1b1d"/><circle cx="650.4" cy="688.4" r="0.75" fill="#1c1b1d"/><circle cx="662.5" cy="692.6" r="0.60" fill="#1c1b1d"/><circle cx="652.9" cy="716.6" r="0.52" fill="#1c1b1d"/><circle cx="650.3" cy="689.9" r="0.52" fill="#1c1b1d"/><circle cx="650.3" cy="703.4" r="0.68" fill="#1c1b1d"/><circle cx="653.0" cy="688.8" r="0.75" fill="#1c1b1d"/><circle cx="655.2" cy="683.6" r="0.30" fill="#1c1b1d"/><circle cx="989.1" cy="575.3" r="0.75" fill="#1c1b1d"/><circle cx="997.8" cy="507.6" r="0.52" fill="#1c1b1d"/><circle cx="1013.9" cy="563.5" r="0.90" fill="#1c1b1d"/><circle cx="1010.1" cy="501.4" r="0.75" fill="#1c1b1d"/><circle cx="1005.1" cy="564.4" r="0.45" fill="#1c1b1d"/><circle cx="1003.9" cy="513.4" r="0.52" fill="#1c1b1d"/><circle cx="998.7" cy="614.5" r="0.83" fill="#1c1b1d"/><circle cx="993.4" cy="560.1" r="0.38" fill="#1c1b1d"/><circle cx="1011.6" cy="604.5" r="0.45" fill="#1c1b1d"/><circle cx="1003.9" cy="573.1" r="0.38" fill="#1c1b1d"/><circle cx="1007.4" cy="564.7" r="0.75" fill="#1c1b1d"/><circle cx="1000.8" cy="500.1" r="0.52" fill="#1c1b1d"/><circle cx="986.5" cy="611.5" r="0.83" fill="#1c1b1d"/><circle cx="1009.3" cy="536.9" r="0.30" fill="#1c1b1d"/><circle cx="1010.6" cy="613.6" r="0.38" fill="#1c1b1d"/><circle cx="999.6" cy="508.3" r="0.75" fill="#1c1b1d"/><circle cx="1007.4" cy="515.4" r="0.60" fill="#1c1b1d"/><circle cx="1001.4" cy="531.8" r="0.83" fill="#1c1b1d"/><circle cx="997.8" cy="525.4" r="0.60" fill="#1c1b1d"/><circle cx="1006.4" cy="524.1" r="0.45" fill="#1c1b1d"/><circle cx="1013.9" cy="578.0" r="0.60" fill="#1c1b1d"/><circle cx="1000.5" cy="514.5" r="0.45" fill="#1c1b1d"/><circle cx="995.5" cy="570.6" r="0.45" fill="#1c1b1d"/><circle cx="992.2" cy="508.5" r="0.68" fill="#1c1b1d"/><circle cx="992.4" cy="608.7" r="0.83" fill="#1c1b1d"/><circle cx="987.4" cy="524.0" r="0.75" fill="#9c1626"/><circle cx="990.3" cy="515.6" r="0.90" fill="#9c1626"/><circle cx="997.4" cy="542.8" r="0.83" fill="#9c1626"/><circle cx="1002.1" cy="520.2" r="0.38" fill="#9c1626"/><circle cx="994.6" cy="538.9" r="0.60" fill="#9c1626"/><circle cx="1000.6" cy="558.9" r="0.98" fill="#9c1626"/><circle cx="988.0" cy="537.2" r="0.52" fill="#9c1626"/><circle cx="1003.2" cy="524.9" r="0.45" fill="#9c1626"/><circle cx="995.0" cy="538.8" r="0.52" fill="#9c1626"/><circle cx="991.0" cy="578.9" r="0.60" fill="#9c1626"/><circle cx="968.0" cy="724.0" r="0.30" fill="#1c1b1d"/><circle cx="973.0" cy="746.9" r="0.90" fill="#1c1b1d"/><circle cx="970.3" cy="747.9" r="0.38" fill="#1c1b1d"/><circle cx="954.5" cy="697.1" r="0.52" fill="#1c1b1d"/><circle cx="939.1" cy="710.3" r="0.90" fill="#1c1b1d"/><circle cx="946.5" cy="742.7" r="0.60" fill="#1c1b1d"/><circle cx="952.2" cy="756.6" r="0.90" fill="#1c1b1d"/><circle cx="957.0" cy="737.5" r="0.38" fill="#1c1b1d"/><circle cx="947.7" cy="757.5" r="0.68" fill="#1c1b1d"/><circle cx="956.5" cy="739.8" r="0.30" fill="#1c1b1d"/><circle cx="958.0" cy="720.2" r="0.83" fill="#1c1b1d"/><circle cx="942.7" cy="756.9" r="0.38" fill="#1c1b1d"/><circle cx="943.7" cy="727.6" r="0.68" fill="#1c1b1d"/><circle cx="945.5" cy="689.6" r="0.83" fill="#1c1b1d"/><circle cx="945.9" cy="727.6" r="0.68" fill="#1c1b1d"/><circle cx="952.1" cy="726.7" r="0.60" fill="#1c1b1d"/><circle cx="970.6" cy="696.3" r="0.75" fill="#1c1b1d"/><circle cx="945.6" cy="711.7" r="0.68" fill="#1c1b1d"/><circle cx="619.6" cy="455.3" r="0.68" fill="#1c1b1d"/><circle cx="616.9" cy="466.7" r="0.75" fill="#1c1b1d"/><circle cx="628.0" cy="435.9" r="0.38" fill="#1c1b1d"/><circle cx="619.2" cy="504.7" r="0.68" fill="#1c1b1d"/><circle cx="626.6" cy="459.6" r="0.38" fill="#1c1b1d"/><circle cx="873" cy="855" r="1.20" fill="#1c1b1d"/></g>
</svg>

<!-- RIGHT DOCK -->
<div class="a" style="left:1592px;top:64px;width:328px;height:1016px;background:#3c3c3c"></div>
<div class="a" style="left:1594px;top:64px;width:324px;height:12px;background:#3f3f3f"></div>
<svg class="a" style="left:1618px;top:67px" width="10" height="7" viewBox="0 0 10 7"><path d="M4.5 1L2 3.5L4.5 6M8.5 1L6 3.5L8.5 6" fill="none" stroke="#dcdcdc" stroke-width="1.2"/></svg>
<svg class="a" style="left:1904px;top:67px" width="10" height="7" viewBox="0 0 10 7"><path d="M1.5 1L4 3.5L1.5 6M5.5 1L8 3.5L5.5 6" fill="none" stroke="#dcdcdc" stroke-width="1.2"/></svg>
<!-- dock column -->
<div class="a" style="left:1594.5px;top:77px;width:37.5px;height:1003px;background:#535353"></div>
<div class="a" style="left:1594.5px;top:172.5px;width:37.5px;height:1px;background:#3d3d3d"></div>
<div class="a" style="left:1594.5px;top:242px;width:37.5px;height:1px;background:#3d3d3d"></div>
<div class="a" style="left:1594.5px;top:311px;width:37.5px;height:1px;background:#3d3d3d"></div>
<div class="a" style="left:1594.5px;top:352px;width:37.5px;height:1px;background:#3d3d3d"></div>
<div class="a grip" style="left:1604px;top:80px"></div>
<div class="a grip" style="left:1604px;top:176.5px"></div>
<div class="a grip" style="left:1604px;top:246px"></div>
<div class="a grip" style="left:1604px;top:315px"></div>
<svg class="a" style="left:1594px;top:77px" width="38" height="280" viewBox="1594 77 38 280">
<!-- history -->
<g fill="none" stroke="#e6e6e6" stroke-width="1"><rect x="1607.5" y="91.5" width="3" height="3"/><rect x="1607.5" y="96.5" width="3" height="3"/></g>
<rect x="1607" y="101" width="4" height="4" fill="#e6e6e6"/>
<path d="M1614.5 93.5C1618.5 93 1619.5 96 1619 99C1618.5 101.5 1617 103 1615.5 104" fill="none" stroke="#e6e6e6" stroke-width="1.3"/>
<path d="M1613 93.5L1616 91V96Z" fill="#e6e6e6"/>
<!-- play -->
<path d="M1607.5 121.5L1620.5 128L1607.5 134.5Z" fill="#e6e6e6"/>
<!-- comment -->
<path d="M1609 148.5H1620A1.5 1.5 0 0 1 1621.5 150V157A1.5 1.5 0 0 1 1620 158.5H1612L1610 161.5V158.5H1609A1.5 1.5 0 0 1 1607.5 157V150A1.5 1.5 0 0 1 1609 148.5Z" fill="#e6e6e6"/>
<!-- brush presets -->
<g fill="#e6e6e6"><rect x="1603" y="189" width="1.5" height="1.5"/><rect x="1606" y="189" width="4" height="1.3"/><rect x="1603" y="192" width="1.5" height="1.5"/><rect x="1606" y="192" width="4" height="1.3"/><rect x="1603" y="195" width="1.5" height="1.5"/><rect x="1606" y="195" width="4" height="1.3"/></g>
<path d="M1614 198L1622 190" stroke="#e6e6e6" stroke-width="2" stroke-linecap="round"/>
<path d="M1607.5 204.5C1607.5 200.5 1609.5 198.5 1612 199C1614 199.5 1614 202.5 1611.5 203.5C1610.5 204 1609 204.5 1607.5 204.5Z" fill="#e6e6e6"/>
<!-- brush settings -->
<path d="M1607 219L1614 219M1614.5 219H1622" stroke="#e6e6e6" stroke-width="1.4"/>
<path d="M1604 219C1606 216.5 1609 216.5 1611 219C1609 221 1606 221 1604 219Z" fill="#e6e6e6"/>
<path d="M1605 227.5H1613" stroke="#e6e6e6" stroke-width="1.4"/>
<path d="M1617 227.5C1619 223 1621.5 223 1622 224.5V231C1621.5 232.5 1619 232 1617 227.5Z" fill="#e6e6e6"/>
</svg>
<div class="t" style="left:1606px;top:257px;font-size:16px;color:#e6e6e6">A</div>
<div class="a" style="left:1620px;top:257px;width:1px;height:16px;background:#e6e6e6"></div>
<svg class="a" style="left:1607px;top:286px" width="12" height="16" viewBox="0 0 12 16"><path d="M5 1H11V2.5H10V15H8.5V2.5H7V15H5.5V8.5C2.5 8.5 1 7 1 4.8C1 2.5 2.5 1 5 1Z" fill="#e6e6e6"/></svg>
<svg class="a" style="left:1604px;top:326px" width="18" height="16" viewBox="0 0 18 16"><g fill="none" stroke="#e6e6e6" stroke-width="1.1"><path d="M1 3.5H16M1 8.5H16M1 13H16"/></g><g fill="#535353" stroke="#e6e6e6" stroke-width="1.1"><circle cx="5" cy="3.5" r="2"/><circle cx="12.5" cy="8.5" r="2"/><circle cx="7" cy="13" r="2"/></g></svg>

<!-- ADJUSTMENTS PANEL -->
<div class="a" style="left:1635px;top:77px;width:284px;height:307px;background:#535353"></div>
<div class="a" style="left:1635px;top:77px;width:284px;height:17.5px;background:#424242"></div>
<div class="a" style="left:1764px;top:77px;width:83px;height:17.5px;background:#535353"></div>
<div class="a" style="left:1667.5px;top:78px;width:1px;height:16px;background:#3a3a3a"></div>
<div class="a" style="left:1700px;top:78px;width:1px;height:16px;background:#3a3a3a"></div>
<div class="a" style="left:1731.5px;top:78px;width:1px;height:16px;background:#3a3a3a"></div>
<div class="a" style="left:1847px;top:78px;width:1px;height:16px;background:#3a3a3a"></div>
<div class="a" style="left:1881px;top:78px;width:1px;height:16px;background:#3a3a3a"></div>
<div class="a" style="left:1641px;top:78px;width:26.5px;height:16px;overflow:hidden"><span class="t pt" style="left:0.5px;top:2px">Color</span></div>
<div class="a" style="left:1673px;top:78px;width:26.5px;height:16px;overflow:hidden"><span class="t pt" style="left:0.5px;top:2px">Swatches</span></div>
<div class="a" style="left:1705px;top:78px;width:26.5px;height:16px;overflow:hidden"><span class="t pt" style="left:0.5px;top:2px">Gradients</span></div>
<div class="a" style="left:1737.5px;top:78px;width:26.5px;height:16px;overflow:hidden"><span class="t pt" style="left:0.5px;top:2px">Patterns</span></div>
<span class="t pt" style="left:1769px;top:80px;color:#f2f2f2">Adjustments</span>
<div class="a" style="left:1853px;top:78px;width:27.5px;height:16px;overflow:hidden"><span class="t pt" style="left:0.5px;top:2px">Libraries</span></div>
<svg class="a" style="left:1904px;top:81px" width="11" height="9" viewBox="0 0 11 9"><path d="M0 0.6H10.5M0 2.9H10.5M0 5.2H10.5M0 7.5H10.5" stroke="#d8d8d8" stroke-width="1"/></svg>
<div class="t" style="left:1644px;top:104px;font-size:12.7px;color:#dcdcdc">Add an adjustment</div>
<svg class="a" style="left:1670px;top:125px" width="145" height="78" viewBox="1670 125 145 78">
<defs>
<linearGradient id="g1" x1="0" y1="0" x2="1" y2="0"><stop offset="0" stop-color="#222"/><stop offset="1" stop-color="#eee"/></linearGradient>
<linearGradient id="g2" x1="0" y1="0" x2="1" y2="1"><stop offset="0" stop-color="#eee"/><stop offset="0.5" stop-color="#777"/><stop offset="1" stop-color="#eee"/></linearGradient>
</defs>
<!-- row1 -->
<circle cx="1693" cy="137.5" r="4.2" fill="none" stroke="#e0e0e0" stroke-width="1.3"/>
<path d="M1693 133.3A4.2 4.2 0 0 1 1693 141.7Z" fill="#e0e0e0"/>
<g stroke="#e0e0e0" stroke-width="1.1"><path d="M1693 129.5V131.3M1693 143.7V145.5M1685 137.5H1686.8M1699.2 137.5H1701M1687.3 131.8L1688.5 133M1697.5 142L1698.7 143.2M1698.7 131.8L1697.5 133M1688.5 142L1687.3 143.2"/></g>
<path d="M1709.5 144.5V138L1711 135L1712 138L1713 133L1714.5 137L1716 131L1717.5 136L1719 132L1720.5 137L1722 134L1723.5 138L1725.5 135V144.5Z" fill="#e0e0e0"/>
<rect x="1734.5" y="130.5" width="15" height="13.5" fill="#5a5a5a" stroke="#cfcfcf" stroke-width="1"/>
<path d="M1739.5 130.5V144M1744.5 130.5V144M1734.5 135H1749.5M1734.5 139.5H1749.5" stroke="#9a9a9a" stroke-width="0.8"/>
<path d="M1735 143.5C1741 143 1743 131 1749 131" fill="none" stroke="#e0e0e0" stroke-width="1.2"/>
<rect x="1758.5" y="131" width="15.5" height="12.5" fill="#e0e0e0" stroke="#e0e0e0" stroke-width="1"/>
<path d="M1759.5 142.5L1773 132V142.5Z" fill="#555"/>
<path d="M1760 134.5H1764M1762 132.5V136.5" stroke="#333" stroke-width="1.1"/>
<path d="M1767.5 140.5H1771.5" stroke="#e0e0e0" stroke-width="1.1"/>
<defs><radialGradient id="vib" cx="0.5" cy="0.35" r="0.6"><stop offset="0" stop-color="#3a3a3a"/><stop offset="1" stop-color="#9a9a9a"/></radialGradient></defs>
<path d="M1782 132H1797L1789.5 145Z" fill="url(#vib)" stroke="#e0e0e0" stroke-width="1.2" stroke-linejoin="round"/>
<!-- row2 -->
<rect x="1674.5" y="157.5" width="15.5" height="13.5" fill="url(#g1)" stroke="#e0e0e0" stroke-width="1"/>
<path d="M1675 158H1690V163.5H1675Z" fill="#e0e0e0"/>
<path d="M1677.5 158.5V163M1680 158.5V163M1682.5 158.5V163M1685 158.5V163M1687.5 158.5V163" stroke="#333" stroke-width="1"/>
<g fill="none" stroke="#e0e0e0" stroke-width="1.1"><path d="M1699 160H1713M1706 157V160M1697.5 165L1700 160L1702.5 165M1709.5 165L1712 160L1714.5 165"/></g>
<path d="M1697 165H1703A3 3 0 0 1 1697 165ZM1709 165H1715A3 3 0 0 1 1709 165Z" fill="#e0e0e0"/>
<circle cx="1706" cy="157" r="1.3" fill="#e0e0e0"/>
<rect x="1722.5" y="157.5" width="15.5" height="13.5" fill="#e0e0e0" stroke="#e0e0e0" stroke-width="1"/>
<rect x="1723.5" y="158.5" width="6.5" height="11.5" fill="#4a4a4a"/>
<path d="M1745.5 160H1748.5L1749.5 158.5H1754.5L1755.5 160H1759.5V169H1745.5Z" fill="#e0e0e0"/>
<circle cx="1752" cy="164" r="2.6" fill="#555"/>
<circle cx="1756.5" cy="169" r="3.3" fill="#535353" stroke="#e0e0e0" stroke-width="1.2"/>
<circle cx="1777.5" cy="161" r="4.3" fill="#bbb"/>
<circle cx="1774.5" cy="166" r="4.3" fill="#ddd" opacity="0.9"/>
<circle cx="1780.5" cy="166" r="4.3" fill="#999" opacity="0.9"/>
<circle cx="1777.5" cy="164.5" r="1.8" fill="#444"/>
<rect x="1794.5" y="157.5" width="15.5" height="13.5" fill="#555" stroke="#e0e0e0" stroke-width="1.1"/>
<path d="M1794.5 162H1810M1794.5 166.5H1810M1799.7 157.5V171M1804.8 157.5V171" stroke="#e0e0e0" stroke-width="1"/>
<rect x="1795.5" y="158.5" width="3.6" height="3" fill="#8a8a8a"/><rect x="1800.5" y="158.5" width="3.6" height="3" fill="#707070"/>
<!-- row3 -->
<rect x="1686.5" y="184.5" width="15.5" height="13.5" fill="#e0e0e0"/>
<rect x="1687.5" y="185.5" width="13.5" height="11.5" fill="#535353"/>
<ellipse cx="1694.2" cy="191.2" rx="4.8" ry="3.2" fill="#e0e0e0" transform="rotate(-30 1694.2 191.2)"/>
<path d="M1690 196L1699 186" stroke="#535353" stroke-width="1"/>
<rect x="1710.5" y="184.5" width="15.5" height="13.5" fill="url(#g2)" stroke="#e0e0e0" stroke-width="1"/>
<path d="M1711 193L1719 185M1715 198L1725.5 187.5" stroke="#444" stroke-width="1.5"/>
<rect x="1734.5" y="184.5" width="15.5" height="13.5" fill="#e0e0e0"/>
<path d="M1735 192L1739 189L1743 191L1747 187.5L1749.5 189V192.5L1746 195L1742 193L1738 196L1735 195Z" fill="#3a3a3a"/>
<rect x="1758.5" y="184.5" width="15.5" height="13.5" fill="#6a6a6a" stroke="#e0e0e0" stroke-width="1"/>
<path d="M1758.5 184.5L1766.2 191.2L1774 184.5ZM1758.5 198L1766.2 191.2L1774 198Z" fill="#e0e0e0"/>
<rect x="1782.5" y="184.5" width="15.5" height="13.5" fill="url(#g1)" stroke="#e0e0e0" stroke-width="1"/>
</svg>
<div class="a" style="left:1635px;top:384px;width:284px;height:3px;background:#3a3a3a"></div>

<!-- LAYERS PANEL -->
<div class="a" style="left:1635px;top:387px;width:284px;height:691px;background:#535353"></div>
<div class="a" style="left:1635px;top:387px;width:284px;height:17.5px;background:#424242"></div>
<div class="a" style="left:1635px;top:387px;width:49.5px;height:17.5px;background:#535353"></div>
<div class="a" style="left:1748.5px;top:388px;width:1px;height:16px;background:#3a3a3a"></div>
<div class="a" style="left:1793px;top:388px;width:1px;height:16px;background:#3a3a3a"></div>
<span class="t pt" style="left:1642.5px;top:390.5px;color:#f2f2f2;font-size:11.5px">Layers</span>
<span class="t pt" style="left:1689.5px;top:390.5px;font-size:11.5px">Channels</span>
<span class="t pt" style="left:1755.5px;top:390.5px;font-size:11.5px">Paths</span>
<svg class="a" style="left:1904px;top:391.5px" width="11" height="9" viewBox="0 0 11 9"><path d="M0 0.6H10.5M0 2.9H10.5M0 5.2H10.5M0 7.5H10.5" stroke="#d8d8d8" stroke-width="1"/></svg>
<!-- kind row -->
<div class="a" style="left:1639px;top:414px;width:98px;height:21px;background:#434343;border:1px solid #565656;border-radius:2px"></div>
<svg class="a" style="left:1646px;top:418px" width="12" height="13" viewBox="0 0 12 13"><circle cx="5" cy="5" r="3.6" fill="none" stroke="#e6e6e6" stroke-width="1.5"/><path d="M7.7 7.7L10.8 10.8" stroke="#e6e6e6" stroke-width="2"/></svg>
<span class="t" style="left:1661px;top:418.5px;font-size:12.5px;color:#e6e6e6">Kind</span>
<svg class="a" style="left:1726px;top:423px" width="7" height="5" viewBox="0 0 7 5"><path d="M0.5 0.5L3.5 3.5L6.5 0.5" fill="none" stroke="#c8c8c8" stroke-width="1"/></svg>
<svg class="a" style="left:1750px;top:414px" width="140" height="20" viewBox="1750 414 140 20">
<rect x="1752" y="419.5" width="11.5" height="9" fill="none" stroke="#e0e0e0" stroke-width="1.2"/>
<path d="M1753.5 427.5L1756 423.5L1757.5 425.5L1759.5 422L1762 427.5Z" fill="#e0e0e0"/>
<circle cx="1782.5" cy="424.5" r="5" fill="#e0e0e0"/>
<path d="M1779.5 428.5L1786 421A5 5 0 0 1 1779.5 428.5Z" fill="#535353"/>
<circle cx="1782.5" cy="424.5" r="5" fill="none" stroke="#e0e0e0" stroke-width="0.9"/>
<path d="M1802 418.5H1812.5V422H1811.3L1811 420H1808.3V429.2H1809.8V430.3H1804.7V429.2H1806.2V420H1803.5L1803.2 422H1802Z" fill="#e0e0e0"/>
<rect x="1826" y="419.5" width="9.5" height="9.5" fill="none" stroke="#e0e0e0" stroke-width="1.1"/>
<g fill="#e0e0e0"><rect x="1824.8" y="418.3" width="2.4" height="2.4"/><rect x="1834.3" y="418.3" width="2.4" height="2.4"/><rect x="1824.8" y="427.8" width="2.4" height="2.4"/><rect x="1834.3" y="427.8" width="2.4" height="2.4"/></g>
<path d="M1853 418.5H1857.5L1860 421V428.5H1853Z" fill="none" stroke="#e0e0e0" stroke-width="1.2"/>
<rect x="1850.5" y="424.5" width="5" height="6" fill="#e0e0e0"/>
<rect x="1875.5" y="418" width="9" height="15" rx="4.5" fill="#3e3e3e" stroke="#4c4c4c" stroke-width="0.8"/>
<circle cx="1880" cy="418.8" r="4" fill="#e8e8e8"/>
</svg>
<div class="a" style="left:1636px;top:437px;width:282px;height:1px;background:#474747"></div>
<!-- blend row -->
<div class="a" style="left:1639px;top:443.5px;width:126px;height:22px;background:#4e4e4e;border:1px solid #4a4a4a;border-radius:2px"></div>
<span class="t" style="left:1647.5px;top:448.5px;font-size:12.5px;color:#8e8e8e">Normal</span>
<span class="t" style="left:1770.5px;top:447.5px;font-size:12.5px;color:#8e8e8e">Opacity:</span>
<div class="a" style="left:1822px;top:444px;width:47px;height:18.5px;background:#474747;border:1px solid #4c4c4c"></div>
<div class="a" style="left:1869px;top:444px;width:14px;height:18.5px;background:#4e4e4e;border:1px solid #4c4c4c"></div>
<span class="t" style="left:1826px;top:448.5px;font-size:12.5px;color:#6e6e6e">100%</span>
<div class="a" style="left:1636px;top:468px;width:282px;height:1px;background:#474747"></div>
<!-- lock row -->
<span class="t" style="left:1641.5px;top:477.5px;font-size:12.5px;color:#dcdcdc">Lock:</span>
<svg class="a" style="left:1676px;top:474px" width="110" height="20" viewBox="1676 474 110 20">
<rect x="1679.5" y="478.5" width="10.5" height="10.5" fill="none" stroke="#e0e0e0" stroke-width="1.1"/>
<g fill="#e0e0e0"><rect x="1680" y="479" width="3.2" height="3.2"/><rect x="1686.4" y="479" width="3.2" height="3.2"/><rect x="1683.2" y="482.2" width="3.2" height="3.2"/><rect x="1680" y="485.4" width="3.2" height="3.2"/><rect x="1686.4" y="485.4" width="3.2" height="3.2"/></g>
<path d="M1705 487L1712 479.5" stroke="#e0e0e0" stroke-width="2.4" stroke-linecap="round"/>
<path d="M1700.5 491C1700.5 488 1702 486.5 1704 487C1705.5 487.5 1705.5 489.5 1703.5 490.5C1702.5 491 1701.5 491 1700.5 491Z" fill="#e0e0e0"/>
<path d="M1728 478V490M1722 484H1734" stroke="#e0e0e0" stroke-width="1.2"/>
<path d="M1728 477.5L1726 480H1730ZM1728 490.5L1726 488H1730ZM1721.5 484L1724 482V486ZM1734.5 484L1732 482V486Z" fill="#e0e0e0"/>
<path d="M1744.5 480.5H1754.5V489.5M1747 478V487.5H1757" fill="none" stroke="#e0e0e0" stroke-width="1.1"/>
<path d="M1747 480.5L1754.5 487.5" stroke="#e0e0e0" stroke-width="0.8"/>
<rect x="1767.5" y="483" width="10" height="8" fill="#e0e0e0"/>
<path d="M1769.5 483V480.5A3 3 0 0 1 1775.5 480.5V483" fill="none" stroke="#e0e0e0" stroke-width="1.3"/>
<circle cx="1772.5" cy="486.5" r="1.2" fill="#535353"/>
</svg>
<span class="t" style="left:1796.5px;top:477.5px;font-size:12.5px;color:#8e8e8e">Fill:</span>
<div class="a" style="left:1822px;top:474px;width:47px;height:18.5px;background:#474747;border:1px solid #4c4c4c"></div>
<div class="a" style="left:1869px;top:474px;width:14px;height:18.5px;background:#4e4e4e;border:1px solid #4c4c4c"></div>
<span class="t" style="left:1826px;top:478.5px;font-size:12.5px;color:#6e6e6e">100%</span>
<!-- layer rows -->
<div class="a" style="left:1636px;top:500.5px;width:267px;height:122px;background:#535353"></div>
<div class="a" style="left:1903px;top:500.5px;width:15px;height:552px;background:#4f4f4f"></div>
<div class="a" style="left:1636px;top:540.5px;width:267px;height:1px;background:#4a4a4a"></div>
<div class="a" style="left:1664px;top:541px;width:239px;height:41px;background:#536a82"></div>
<div class="a" style="left:1636px;top:581.5px;width:267px;height:1px;background:#44556a"></div>
<div class="a" style="left:1636px;top:622px;width:267px;height:1px;background:#4a4a4a"></div>
<div class="a" style="left:1664px;top:500.5px;width:1px;height:122px;background:#4a4a4a"></div>
<svg class="a" style="left:1643px;top:516px" width="15" height="11" viewBox="0 0 15 11"><path d="M0.8 5.5C3 2 5 1 7.5 1C10 1 12 2 14.2 5.5C12 9 10 10 7.5 10C5 10 3 9 0.8 5.5Z" fill="#e6e6e6"/><circle cx="7.5" cy="5.5" r="2.8" fill="#535353"/><circle cx="7.5" cy="5.5" r="1.6" fill="#e6e6e6"/></svg>
<div class="a" style="left:1643px;top:556px;width:13px;height:13px;border:1px solid #4e4e4e"></div>
<div class="a" style="left:1643px;top:597px;width:13px;height:13px;border:1px solid #4e4e4e"></div>
<!-- thumbs -->
<div class="a" style="left:1669.5px;top:506px;width:24.5px;height:31.5px;background:#fff;border:1px solid #3a3a3a;overflow:hidden">
<svg width="23" height="30" viewBox="0 0 23 30"><defs><clipPath id="th"><path d="M6.5 9C6.5 5.5 8.8 4.5 11.5 4.5C14.2 4.5 16.5 5.5 16.5 9V18C16.5 21.5 14.5 23.5 11.5 23.5C8.5 23.5 6.5 21.5 6.5 18Z"/></clipPath></defs>
<path d="M6.5 9C6.5 5.5 8.8 4.5 11.5 4.5C14.2 4.5 16.5 5.5 16.5 9V18C16.5 21.5 14.5 23.5 11.5 23.5C8.5 23.5 6.5 21.5 6.5 18Z" fill="#1c1b1d"/>
<g clip-path="url(#th)"><rect x="8" y="6" width="2" height="18" fill="#10462b"/><rect x="10" y="10" width="1.8" height="14" fill="#e9c22a"/><rect x="11.8" y="5" width="2" height="19" fill="#c8152e"/><rect x="13.8" y="6" width="1.6" height="17" fill="#1d5ea0"/><rect x="9" y="11" width="1.2" height="6" fill="#22995a"/></g>
<rect x="8.3" y="22" width="1" height="4" fill="#22995a"/><rect x="10.8" y="22" width="0.8" height="4.5" fill="#e9c22a"/><rect x="12.5" y="22" width="0.8" height="5" fill="#c8152e"/>
</svg></div>
<div class="a" style="left:1669.5px;top:547px;width:25px;height:31.5px;background:linear-gradient(#62d2c9,#30c9b6)"></div>
<div class="a" style="left:1678px;top:563.5px;width:16.5px;height:15px;background:#3a4853"></div>
<svg class="a" style="left:1680px;top:565px" width="13" height="12" viewBox="0 0 13 12"><path d="M5 1H8.5L11 3.5V10H5Z" fill="none" stroke="#d8d8d8" stroke-width="1.1"/><path d="M8 1V4H11" fill="none" stroke="#d8d8d8" stroke-width="0.9"/><rect x="1.5" y="6" width="5" height="5" fill="#d8d8d8"/></svg>
<div class="t" style="left:1676px;top:552px;font-size:6.5px;font-weight:bold;color:#e8fffb">3:4</div>
<svg class="a" style="left:1666px;top:543px" width="32" height="38" viewBox="0 0 32 38"><path d="M1.5 7V1.5H7M25 1.5H30.5V7M30.5 31V36.5H25M7 36.5H1.5V31" fill="none" stroke="#f0f0f0" stroke-width="1.3"/></svg>
<div class="a" style="left:1669.5px;top:588px;width:24.5px;height:31.5px;background:#fff;border:1px solid #3a3a3a"></div>
<span class="t" style="left:1703.5px;top:515.5px;font-size:12.5px;color:#e6e6e6">Design</span>
<span class="t" style="left:1703.5px;top:556.5px;font-size:12.5px;color:#f2f2f2">18x24</span>
<span class="t" style="left:1703.5px;top:597.5px;font-size:12.5px;color:#e6e6e6">Background</span>
<!-- bottom bar -->
<div class="a" style="left:1636px;top:1053px;width:282px;height:1px;background:#474747"></div>
<svg class="a" style="left:1712px;top:1058px" width="185" height="18" viewBox="1712 1058 185 18">
<g fill="none" stroke="#9a9a9a" stroke-width="1.3"><rect x="1717" y="1063" width="7" height="5" rx="2.5"/><rect x="1724" y="1063" width="7" height="5" rx="2.5"/></g>
<text x="1745" y="1071" font-family="Liberation Serif" font-style="italic" font-size="14" fill="#e0e0e0">fx</text>
<path d="M1755 1071H1758L1756.5 1072.8Z" fill="#e0e0e0"/>
<rect x="1771" y="1060" width="13.5" height="11" fill="#e0e0e0"/>
<circle cx="1777.7" cy="1065.5" r="2.8" fill="#3a3a3a"/>
<circle cx="1805" cy="1065.5" r="5.2" fill="#e0e0e0"/>
<path d="M1801.5 1069.5L1808.5 1061.5A5.2 5.2 0 0 1 1801.5 1069.5Z" fill="#535353"/>
<circle cx="1805" cy="1065.5" r="5.2" fill="none" stroke="#e0e0e0" stroke-width="0.9"/>
<path d="M1810 1071H1813L1811.5 1072.8Z" fill="#e0e0e0"/>
<path d="M1825.5 1060H1830L1831 1061.5H1837.5V1071H1825.5Z" fill="#e0e0e0"/>
<path d="M1825.5 1062H1837.5" stroke="#535353" stroke-width="0.8"/>
<rect x="1853.5" y="1059.5" width="11.5" height="11.5" fill="none" stroke="#e0e0e0" stroke-width="1.2"/>
<path d="M1859.2 1062V1068.5M1856 1065.2H1862.5" stroke="#e0e0e0" stroke-width="1.2"/>
<path d="M1879.5 1061.5H1891M1883 1061.5V1059.5H1887.5V1061.5" fill="none" stroke="#e0e0e0" stroke-width="1.1"/>
<path d="M1880.5 1062.5H1890L1889.3 1072H1881.2Z" fill="none" stroke="#e0e0e0" stroke-width="1.2"/>
<path d="M1883.5 1064V1070.5M1885.3 1064V1070.5M1887 1064V1070.5" stroke="#e0e0e0" stroke-width="0.9"/>
</svg>
<div class="a" style="left:1918px;top:64px;width:2px;height:1016px;background:#474747"></div>
<!-- cursor -->
<svg class="a" style="left:1780px;top:1000px" width="45" height="60" viewBox="1780 1000 45 60"><path d="M1788.5 1009L1788.5 1047.5L1797 1039.5L1802.5 1050L1809 1047L1803.5 1036.5L1816 1036.5Z" fill="#fff" stroke="#000" stroke-width="2.6" stroke-linejoin="miter"/></svg>
<div class="a" style="left:0;top:1078px;width:1920px;height:2px;background:#2f2f2f"></div>

</body></html>
